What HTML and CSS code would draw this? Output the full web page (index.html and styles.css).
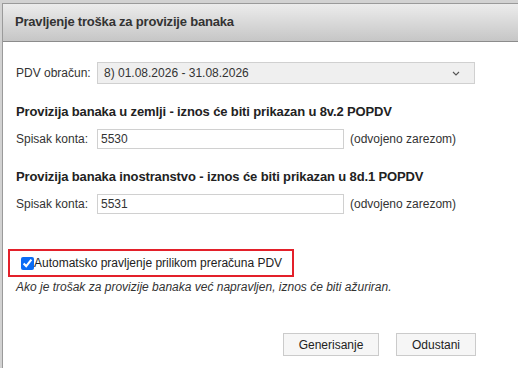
FILE: index.html
```html
<!DOCTYPE html>
<html lang="sr">
<head>
    <meta charset="UTF-8">
    <title>Pravljenje troška za provizije banaka</title>
    <link rel="stylesheet" href="styles.css">
</head>
<body>
<div class="dialog">
    <div class="dialog-header">Pravljenje troška za provizije banaka</div>
    <div class="dialog-body">
        <div class="row">
            <label class="row-label">PDV obračun:</label>
            <div class="select-wrap">
                <select class="period-select">
                    <option>8) 01.08.2026 - 31.08.2026</option>
                </select>
                <svg class="chevron" width="8" height="5" viewBox="0 0 8 5"><path d="M1 1 L4 4 L7 1" fill="none" stroke="#555" stroke-width="1.1"/></svg>
            </div>
        </div>

        <div class="section-title">Provizija banaka u zemlji - iznos će biti prikazan u 8v.2 POPDV</div>
        <div class="row">
            <label class="row-label">Spisak konta:</label>
            <input type="text" class="account-input" value="5530">
            <span class="hint">(odvojeno zarezom)</span>
        </div>

        <div class="section-title">Provizija banaka inostranstvo - iznos će biti prikazan u 8d.1 POPDV</div>
        <div class="row">
            <label class="row-label">Spisak konta:</label>
            <input type="text" class="account-input" value="5531">
            <span class="hint">(odvojeno zarezom)</span>
        </div>

        <div class="auto-box">
            <input type="checkbox" id="autoCreate" checked>
            <label for="autoCreate">Automatsko pravljenje prilikom preračuna PDV</label>
        </div>
        <div class="auto-note">Ako je trošak za provizije banaka već napravljen, iznos će biti ažuriran.</div>

        <div class="actions">
            <button class="btn btn-generate">Generisanje</button>
            <button class="btn btn-cancel">Odustani</button>
        </div>
    </div>
</div>
</body>
</html>
```

FILE: styles.css
```css
html, body { height: 100%; }
body { margin: 0; background: #d2d2d2; font-family: "Liberation Sans", Arial, sans-serif; font-size: 12px; color: #222; overflow: hidden; }

.dialog { margin: 3px 0 0 2px; height: calc(100% - 3px); background: #fff; border-top: 1px solid #9a9a9a; border-left: 1px solid #9a9a9a; box-sizing: border-box; }
.dialog-header {
    height: 37px; line-height: 36px; padding-left: 12px;
    background: linear-gradient(#ececec, #c6c6c6);
    border-bottom: 1px solid #8c8c8c;
    font-weight: bold; font-size: 13px; letter-spacing: -0.2px; color: #333;
}
.dialog-body { padding: 20px 0 0 13px; }

.row { display: flex; align-items: center; }
.row-label { width: 81px; color: #333; }

.select-wrap { position: relative; height: 22px; }
.period-select {
    appearance: none; -webkit-appearance: none; display: block;
    width: 378px; height: 22px; padding: 0 6px;
    background: #efefef; border: 1px solid #d0d0d0; border-radius: 0;
    font-family: inherit; font-size: 12px; color: #333;
}
.chevron { position: absolute; right: 15px; top: 9px; }

.section-title { font-weight: bold; font-size: 13px; line-height: 15px; letter-spacing: -0.13px; color: #222; margin: 20px 0 10px; }

.account-input {
    display: block; width: 247px; height: 20px; box-sizing: border-box; padding: 0 3px;
    border: 1px solid #d0d0d0; font-family: inherit; font-size: 12px; color: #333;
}
.hint { margin-left: 6px; color: #333; }

.auto-box {
    width: 286px; height: 28px; box-sizing: border-box; margin: 35px 0 0 -8px;
    border: 2px solid #e3202a; display: flex; align-items: center; padding-left: 11px;
}
.auto-box input { width: 13px; height: 13px; margin: 0; accent-color: #0b6cf5; }
.auto-box label { color: #222; font-size: 12px; }
.auto-note { font-style: italic; color: #333; line-height: 15px; margin-top: 3px; }

.actions { display: flex; justify-content: flex-end; gap: 17px; width: 460px; margin-top: 38px; }
.btn {
    height: 23px; padding: 0; background: #f6f6f6; border: 1px solid #cbcbcb; border-radius: 0;
    font-family: inherit; font-size: 12px; color: #222; cursor: pointer;
}
.btn-generate { width: 96px; }
.btn-cancel { width: 80px; }
```
